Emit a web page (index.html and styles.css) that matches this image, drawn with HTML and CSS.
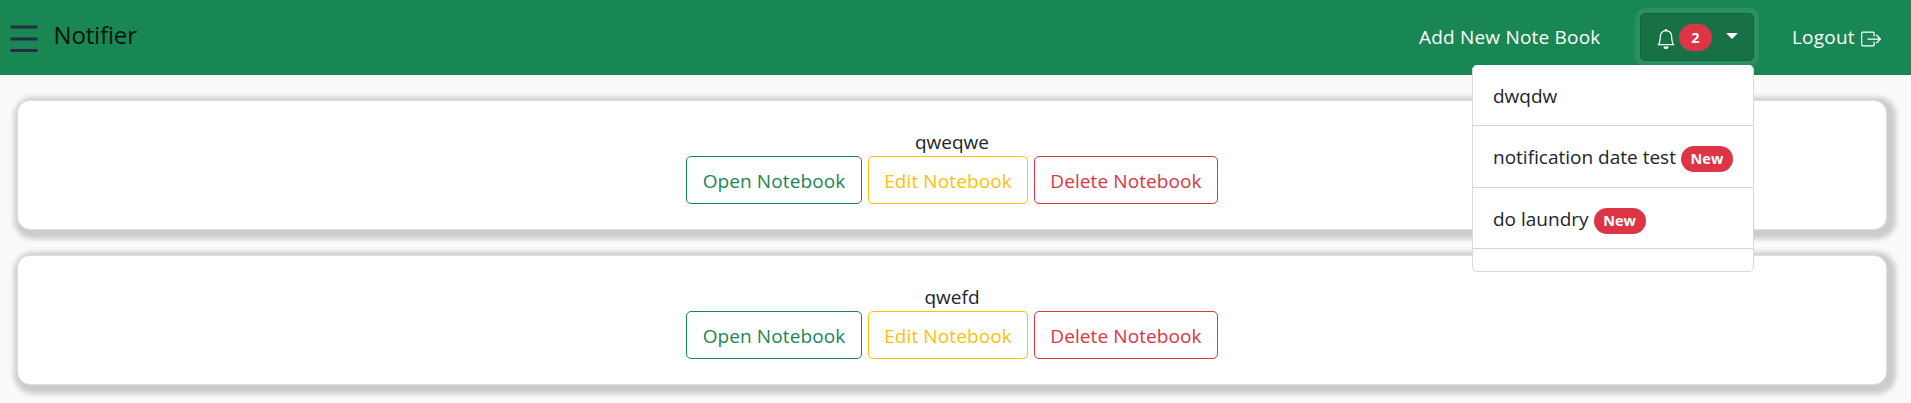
FILE: index.html
```html
<!DOCTYPE html>
<html lang="en">
<head>
<meta charset="utf-8">
<title>Notifier</title>
<link rel="stylesheet" href="styles.css">
</head>
<body>
<header class="navbar">
  <svg class="menu-icon" width="30" height="30" viewBox="0 0 30 30" fill="none" stroke="#292b40" stroke-width="3"><path d="M1.500 3H28.500M1.500 15H28.500M1.500 26.500H28.500"/></svg>
  <span class="brand">Notifier</span>
  <nav class="links">
    <a class="link add">Add New Note Book</a>
    <div class="dropdown">
      <button class="toggle">
        <svg class="bell" width="20" height="20" viewBox="0 0 16 16" fill="#fff"><path d="M8 16a2 2 0 0 0 2-2H6a2 2 0 0 0 2 2zM8 1.918l-.797.161A4.002 4.002 0 0 0 4 6c0 .628-.134 2.197-.459 3.742-.16.767-.376 1.566-.663 2.258h10.244c-.287-.692-.502-1.49-.663-2.258C12.134 8.197 12 6.628 12 6a4.002 4.002 0 0 0-3.203-3.920L8 1.917zM14.220 12c.223.447.481.801.78 1H1c.299-.199.557-.553.78-1C2.680 10.200 3 6.880 3 6c0-2.420 1.720-4.440 4.005-4.901a1 1 0 1 1 1.990 0A5.002 5.002 0 0 1 13 6c0 .88.320 4.200 1.220 6z"/></svg>
        <span class="badge count">2</span>
        <span class="caret"></span>
      </button>
      <div class="menu">
        <div class="item"><span class="label">dwqdw</span></div>
        <div class="item"><span class="label">notification date test</span><span class="badge new">New</span></div>
        <div class="item"><span class="label">do laundry</span><span class="badge new">New</span></div>
      </div>
    </div>
    <a class="link logout">Logout<svg class="exit" width="20" height="20" viewBox="0 0 16 16" fill="#fff"><path fill-rule="evenodd" d="M10 12.500a.5.5 0 0 1-.5.5h-8a.5.5 0 0 1-.5-.5v-9a.5.5 0 0 1 .5-.5h8a.5.5 0 0 1 .5.5v2a.5.5 0 0 0 1 0v-2A1.500 1.500 0 0 0 9.500 2h-8A1.500 1.500 0 0 0 0 3.500v9A1.500 1.500 0 0 0 1.500 14h8a1.500 1.500 0 0 0 1.500-1.500v-2a.5.5 0 0 0-1 0v2z"/><path fill-rule="evenodd" d="M15.854 8.354a.5.5 0 0 0 0-.708l-3-3a.5.5 0 0 0-.708.708L14.293 7.500H5.500a.5.5 0 0 0 0 1h8.793l-2.147 2.146a.5.5 0 0 0 .708.708l3-3z"/></svg></a>
  </nav>
</header>
<main class="books">
  <section class="card">
    <div class="title">qweqwe</div>
    <div class="actions">
      <button class="btn open">Open Notebook</button>
      <button class="btn edit">Edit Notebook</button>
      <button class="btn delete">Delete Notebook</button>
    </div>
  </section>
  <section class="card">
    <div class="title">qwefd</div>
    <div class="actions">
      <button class="btn open">Open Notebook</button>
      <button class="btn edit">Edit Notebook</button>
      <button class="btn delete">Delete Notebook</button>
    </div>
  </section>
</main>
</body>
</html>
```
FILE: styles.css
```css
* { box-sizing: border-box; }
body {
  margin: 0;
  height: 403px;
  overflow: hidden;
  background: #fafafa;
  color: #212529;
  font-family: "Open Sans", "Noto Sans", sans-serif;
  font-size: 19px;
  line-height: 30px;
}
button { font: inherit; margin: 0; }
.navbar {
  display: flex;
  align-items: flex-start;
  height: 75px;
  padding-left: 9px;
  background: #198754;
}
.menu-icon { margin-top: 24px; }
.brand {
  margin: 17px 0 0 14.5px;
  font-size: 24px;
  line-height: 36px;
  letter-spacing: -.15px;
  color: #03140c;
}
.links {
  display: flex;
  align-items: flex-start;
  margin-left: auto;
  padding-right: 30px;
}
.link { display: flex; margin-top: 22px; color: #fff; white-space: nowrap; letter-spacing: .2px; }
.add { width: 182px; margin-right: 39px; }
.logout { width: 89px; margin-left: 38px; justify-content: space-between; }
.exit { margin-top: 7px; }
.dropdown { position: relative; }
.toggle {
  display: flex;
  align-items: flex-start;
  width: 114px;
  height: 48px;
  margin-top: 13px;
  padding: 0 0 0 15px;
  border: 1px solid #13653f;
  border-radius: 5px;
  background: #177145;
  box-shadow: 0 0 0 5px rgba(60, 153, 110, .5);
}
.bell { margin-top: 15px; }
.badge {
  display: flex;
  align-items: center;
  justify-content: center;
  border-radius: 14px;
  background: #dc3545;
  color: #fff;
  font-size: 14.5px;
  font-weight: 700;
  line-height: 15px;
}
.count { width: 33px; height: 27px; margin: 10px 0 0 3px; }
.caret {
  margin: 19px 0 0 14px;
  border: 6px solid transparent;
  border-top-color: #fff;
  border-bottom: 0;
}
.menu {
  position: absolute;
  top: 65px;
  right: 0;
  width: 282px;
  height: 207px;
  border: 1px solid #d9d9d9;
  border-top-color: #fff;
  border-radius: 5px;
  background: #fff;
}
.item {
  display: flex;
  height: 60px;
  padding: 15px 0 0 20px;
  border-bottom: 1px solid #d3d3d3;
  white-space: nowrap;
}
.item:nth-child(2) { height: 62px; padding-top: 16px; }
.item:nth-child(3) { height: 61px; padding-top: 16px; }
.new { width: 52px; height: 26px; margin: 4px 0 0 5px; padding-bottom: 2px; }
.books { display: grid; gap: 25px; padding: 25px 24px 0 17px; }
.card {
  height: 130px;
  padding-top: 26px;
  border: 1px solid #dfdfdf;
  border-radius: 13px;
  background: #fff;
  box-shadow: 3px 3px 5px 6px #ccc;
  text-align: center;
}
.title { height: 29px; }
.actions { display: flex; justify-content: center; gap: 6px; }
.btn {
  height: 48px;
  padding: 2px 0 0;
  border: 1px solid;
  border-radius: 5px;
  background: transparent;
  letter-spacing: .1px;
  white-space: nowrap;
}
.open { width: 176px; color: #198754; }
.edit { width: 160px; color: #ffc107; }
.delete { width: 184px; color: #dc3545; }
```
